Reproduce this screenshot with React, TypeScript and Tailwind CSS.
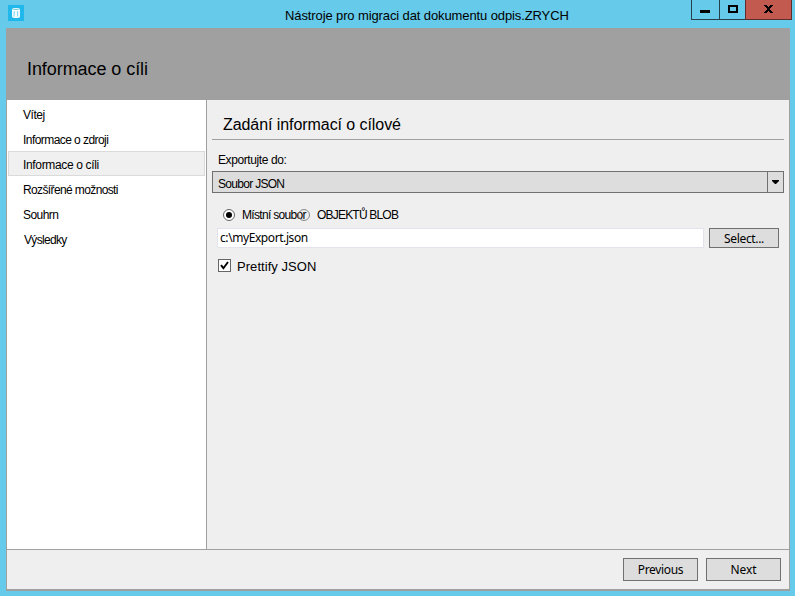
const arial = 'font-["Liberation_Sans",Arial,sans-serif]';
const segoe = 'font-["Noto_Sans","Open_Sans",sans-serif]';

const steps = [
  { label: 'Vítej', style: 'pl-[14px] tracking-[-0.45px]' },
  { label: 'Informace o zdroji', style: 'pl-[14px] tracking-[-0.56px]' },
  { label: 'Informace o cíli', style: 'pl-[14px] tracking-[-0.34px]', active: true },
  { label: 'Rozšířené možnosti', style: 'pl-[14px] tracking-[-0.62px]' },
  { label: 'Souhrn', style: 'pl-[14px] tracking-[-0.55px]' },
  { label: 'Výsledky', style: 'pl-[15px] tracking-[-0.68px]' },
];

function AppIcon() {
  return (
    <svg className="mt-[5px] ml-2 h-4 w-4 shrink-0" viewBox="0 0 16 16">
      <rect width="16" height="16" fill="#20b8ea" />
      <path d="M4 4.4C4 2.6 12 2.6 12 4.4v7.4c0 1.7-8 1.7-8 0z" fill="#f3fbfe" />
      <path d="M5.2 4.4h5.6" stroke="#65c9ea" strokeWidth="0.9" />
      <path d="M6.1 6.8v4.7M9.6 6.8v4.7M6 6.9h1M9 6.9h1" stroke="#5fc8ec" strokeWidth="0.8" />
    </svg>
  );
}

function TitleBar() {
  return (
    <div className="flex h-7 shrink-0">
      <AppIcon />
      <div className={`${arial} ml-[261px] w-[406px] pt-[8px] text-[13px] leading-4 whitespace-nowrap tracking-[-0.11px]`}>
        Nástroje pro migraci dat dokumentu odpis.ZRYCH
      </div>
      <div className="flex h-5 w-[101px]">
        <div className="flex w-[28px] border-b border-l border-[#27404a] pt-[10px] pl-[8px]">
          <div className="h-[3px] w-[10px] bg-black" />
        </div>
        <div className="flex w-[26px] justify-center border-b border-l border-[#27404a] pt-[5px]">
          <div className="h-2 w-[10px] border-2 border-black" />
        </div>
        <div className="flex w-[47px] justify-center border-x border-b border-[#5c2f2c] bg-[#c35a50] pt-[5px]">
          <svg className="h-2 w-[9px]" viewBox="0 0 9 8" shapeRendering="crispEdges">
            <path d="M0 0h3v1h1v1h1V1h1V0h3v1H8v1H7v1H6v2h1v1h1v1h1v1H6V7H5V6H4v1H3v1H0V7h1V6h1V5h1V3H2V2H1V1H0z" />
          </svg>
        </div>
      </div>
    </div>
  );
}

function Sidebar() {
  return (
    <div className="w-[200px] shrink-0 border-r border-[#a0a0a0] bg-white pt-[1px]">
      {steps.map((s) => (
        <div
          key={s.label}
          className={`${arial} ml-px flex h-[25px] w-[197px] items-center border text-[12px] whitespace-nowrap ${s.active ? 'border-[#dadada] bg-[#f0f0f0]' : 'border-transparent'} ${s.style}`}
        >
          <span className="pt-[2px]">{s.label}</span>
        </div>
      ))}
    </div>
  );
}

function Radio({ checked = false }: { checked?: boolean }) {
  return (
    <span className={`flex h-3 w-3 shrink-0 items-center justify-center rounded-full border ${checked ? 'border-[#666] bg-white' : 'border-[#888]'}`}>
      {checked && <span className="h-[6px] w-[6px] rounded-full bg-black" />}
    </span>
  );
}

function Content() {
  return (
    <div className={`${arial} min-w-0 flex-1 pl-[5px]`}>
      <div className="h-10 w-[572px] border-b border-[#a0a0a0] pt-[15px] pl-[11px] text-[16px] leading-5 whitespace-nowrap tracking-[-0.07px]">
        Zadání informací o cílové
      </div>
      <div className="mt-[12px] pl-[6px] text-[12px] leading-4 whitespace-nowrap tracking-[-0.4px]">Exportujte do:</div>
      <div className="mt-[3px] flex h-[22px] w-[572px] border border-[#707070] bg-[#dddddd]">
        <div className="flex-1 pt-[4px] pl-[5px] text-[12px] leading-4 tracking-[-0.7px]">Soubor JSON</div>
        <div className="flex w-4 justify-center border-l border-[#707070] pt-[8px]">
          <svg className="h-1 w-[7px]" viewBox="0 0 7 4">
            <path d="M0 0h7v1L4 4H3L0 1z" />
          </svg>
        </div>
      </div>
      <div className="mt-[14px] flex h-4 items-center pl-[11px] text-[12px] leading-4 whitespace-nowrap">
        <Radio checked />
        <span className="ml-[7px] w-[56px] tracking-[-0.68px]">Místní soubor</span>
        <Radio />
        <span className="ml-[7px] tracking-[-0.8px]">OBJEKTŮ BLOB</span>
      </div>
      <div className="mt-[5px] flex h-[20px] pl-[5px]">
        <div className={`${segoe} h-[20px] w-[487px] border border-[#e3e3ee] bg-white pl-[2px] text-[12px] leading-[18px] tracking-[-0.42px]`}>
          c:\myExport.json
        </div>
        <button className={`${segoe} ml-[5px] h-[20px] w-[70px] border border-[#707070] bg-[#dddddd] text-[12px] leading-[19px] tracking-[-0.35px]`}>
          Select...
        </button>
      </div>
      <div className="mt-[10px] flex h-4 items-center pl-[6px]">
        <span className="-mt-px flex h-[13px] w-[13px] items-center justify-center border border-[#666] bg-white">
          <svg className="h-[9px] w-[9px]" viewBox="0 0 9 9">
            <path d="M1 4.2l2.4 3L8 1" fill="none" stroke="#000" strokeWidth="1.9" />
          </svg>
        </span>
        <span className="ml-[6px] pt-[2px] text-[13px] leading-4 whitespace-nowrap tracking-[0.05px]">Prettify JSON</span>
      </div>
    </div>
  );
}

export default function App() {
  return (
    <div className="flex h-[596px] w-[795px] flex-col overflow-hidden bg-[#66caea] text-black">
      <TitleBar />
      <div className="ml-[6px] flex h-[563px] w-[784px] flex-col border border-b-2 border-[#a0a0a0] bg-[#efefef]">
        <div className={`${arial} h-[71px] shrink-0 bg-[#a0a0a0] pt-[28px] pl-5 text-[18px] leading-6 whitespace-nowrap tracking-[-0.07px]`}>
          Informace o cíli
        </div>
        <div className="flex min-h-0 flex-1">
          <Sidebar />
          <Content />
        </div>
        <div className={`${segoe} flex h-10 shrink-0 gap-2 border-t border-[#a0a0a0] pt-2 pl-[616px] text-[12px] tracking-[-0.35px]`}>
          <button className="h-[23px] w-[75px] border border-[#707070] bg-[#dddddd] leading-5">Previous</button>
          <button className="h-[23px] w-[75px] border border-[#707070] bg-[#dddddd] leading-5 tracking-[-0.1px]">Next</button>
        </div>
      </div>
    </div>
  );
}
